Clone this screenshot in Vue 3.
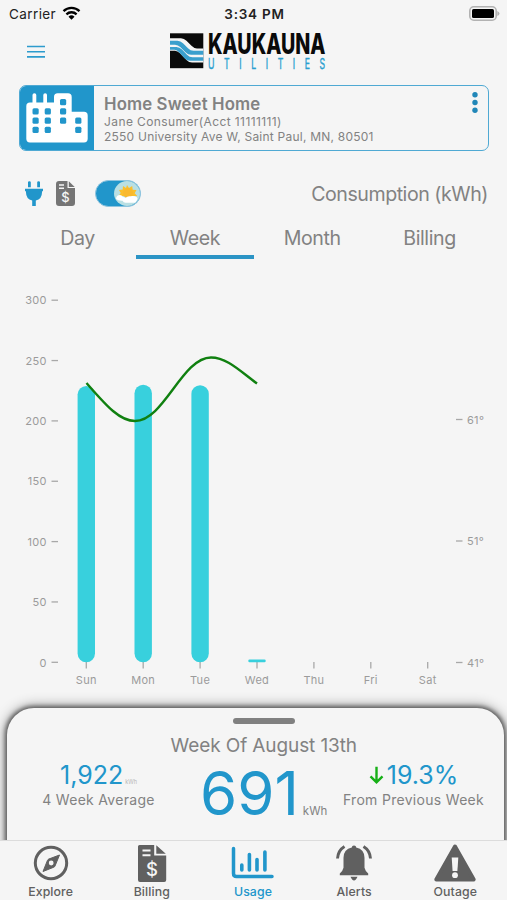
<template>
  <div class="phone">
    <!-- Status bar -->
    <div class="status-bar">
      <div class="carrier">
        <span>Carrier</span>
        <svg class="wifi" viewBox="0 0 18 14">
          <path d="M1 5.2a11.5 11.5 0 0 1 16 0" />
          <path d="M3.9 8.3a7.4 7.4 0 0 1 10.2 0" />
          <path class="dot" d="M6 10.7a4.4 4.4 0 0 1 6 0L9 13.8z" />
        </svg>
      </div>
      <span class="time">3:34 PM</span>
      <svg class="battery" viewBox="0 0 31 15">
        <rect x="0.8" y="0.8" width="26.4" height="13.4" rx="4" fill="#f5f5f5" stroke="#b2b2b2" stroke-width="1.6" />
        <rect x="3" y="3" width="22" height="9" rx="1.6" fill="#000" />
        <path d="M28.3 5v5q2.2-1 2.2-2.5T28.3 5z" fill="#b2b2b2" />
      </svg>
    </div>

    <!-- Header -->
    <header class="header">
      <svg class="burger" viewBox="0 0 18 14">
        <path d="M0 1.5h18M0 6.7h18M0 11.9h18" />
      </svg>
      <svg class="logo" viewBox="0 0 158 38">
        <rect x="1" y="1.300" width="33.300" height="34.900" fill="#0a0a0a" />
        <path d="M1 6.300h11q3 0 5.500 2.500l5 5q2.500 2.700 5.500 2.700h6.300v14H23q-3 0-5.500-2.500L11 21.300Q8.500 18.700 6 18.700H1z" fill="#f5f5f5" />
        <path d="M1 8.700h7.500q3 0 5.500 2.500l5 5q2.500 2.500 5.500 2.500h9.800v4H22q-3 0-5.500-2.500l-5-5Q9 12.700 6 12.700H1z" fill="#3a9fcd" />
        <path d="M1 15h6.500q3 0 5.500 2.500l5 5.300q2.500 2.500 5.500 2.500h10.800v3.400H21q-3 0-5.500-2.500l-5-5.500Q8 17.700 5.500 17.700H1z" fill="#3a9fcd" />
        <text class="logo-name" x="39" y="22.200" textLength="117.500" lengthAdjust="spacingAndGlyphs">KAUKAUNA</text>
        <text class="logo-sub" transform="translate(39 36.700) scale(0.62 1)" textLength="189">UTILITIES</text>
      </svg>
    </header>

    <!-- Account card -->
    <section class="account">
      <div class="account-icon">
        <svg viewBox="0 0 62 50">
          <path
            d="M4 9.500h2.500V2q0-1.700 1.900-1.700T10.300 2v7.500h7V2q0-1.700 1.900-1.700T21 2v7.500h7V4q0-3.700 3.700-3.700H42q3.700 0 3.700 3.700v14.700H58q3.700 0 3.700 3.700V45.700q0 3.700-3.700 3.700H4q-3.700 0-3.700-3.700V13.200q0-3.700 3.700-3.700z"
            fill="#fff"
          />
          <rect
            v-for="(w, i) in windows"
            :key="i"
            :x="w[0]"
            :y="w[1]"
            width="6.200"
            height="6.200"
            rx="1.500"
            fill="#2196cb"
          />
        </svg>
      </div>
      <div class="account-text">
        <h1>Home Sweet Home</h1>
        <p class="owner">Jane Consumer(Acct 11111111)</p>
        <p class="address">2550 University Ave W, Saint Paul, MN, 80501</p>
      </div>
      <svg class="more" viewBox="0 0 6 21">
        <circle cx="3" cy="2.800" r="2.700" />
        <circle cx="3" cy="10.500" r="2.700" />
        <circle cx="3" cy="18.200" r="2.700" />
      </svg>
    </section>

    <!-- Toolbar -->
    <div class="toolbar">
      <svg class="plug" viewBox="0 0 18 25">
        <path d="M3 6.200V1.300Q3 .3 4.400.3t1.400 1v4.900zM12.200 6.200V1.300q0-1 1.400-1t1.400 1v4.900zM0 7.800h18v2.500h-1v1.200q0 6.500-6.200 8V25H7.200v-5.500Q1 18 1 11.500v-1.200H0z" />
      </svg>
      <svg class="bill" viewBox="0 0 19 25">
        <path d="M3 0h8.500v7H19v15q0 3-3 3H3q-3 0-3-3V3q0-3 3-3z" />
        <path d="M12.800.3 18.700 6h-5.900z" />
        <path class="lines" d="M3 4h5M3 7.200h5" />
        <text x="9.500" y="21">$</text>
      </svg>
      <div class="toggle" :class="{ on: weather }" @click="weather = !weather">
        <div class="knob">
          <svg viewBox="0 0 26 26">
            <path d="m13 4 2 3 3.200-2 .5 3.700 3.800.3-1.800 3.300 2.600 2.700H4.500L6.700 12 5 9l3.700-.4L9 5l3 2z" fill="#fbc02d" />
            <circle cx="14" cy="12" r="5" fill="#f9b92e" />
            <path d="M2 18q.3-4 4-4.100 1.700 0 3 2.100 2 0 2.500 1 2-2.300 5-1.700 2-.8 4.500 0 2.500.7 2.600 2.200-1 3.500-2.600 4.200H12q-2.500.2-3.500-1.900-4.500.2-6.500-1.800z" fill="#fff" />
          </svg>
        </div>
      </div>
      <span class="unit-title">Consumption (kWh)</span>
    </div>

    <!-- Tabs -->
    <nav class="tabs">
      <button
        v-for="tab in tabs"
        :key="tab"
        type="button"
        :class="{ active: tab === activeTab }"
        @click="activeTab = tab"
      >
        {{ tab }}
      </button>
    </nav>

    <!-- Chart -->
    <svg class="chart" viewBox="0 0 507 449">
      <g v-for="v in leftTicks" :key="v" class="tick">
        <text x="46.800" :y="yFor(v) + 4.200" text-anchor="end">{{ v }}</text>
        <path :d="`M51.500 ${yFor(v)}h6.500`" />
      </g>
      <g v-for="t in rightTicks" :key="t.label" class="tick">
        <path :d="`M456 ${t.y}h6.500`" />
        <text x="467" :y="t.y + 4.200">{{ t.label }}</text>
      </g>
      <g v-for="(d, i) in days" :key="d.name" class="tick">
        <path :d="`M${xFor(i)} 403v6.500`" />
        <text :x="xFor(i)" y="425" text-anchor="middle">{{ d.name }}</text>
        <rect
          v-if="d.kwh"
          class="bar"
          :x="xFor(i) - 8.700"
          :y="yFor(d.kwh)"
          width="17.400"
          :height="yFor(0) - yFor(d.kwh)"
          :rx="d.kwh > 10 ? 8.700 : 1.200"
        />
      </g>
      <path class="temperature" d="M86.500 124C105 145 119 162 135 162C164 162 182 98.500 211 98.500C227 98.500 240 112 257 124.500" />
    </svg>

    <!-- Summary panel -->
    <section class="summary-wrap">
      <div class="summary">
        <div class="handle"></div>
        <h2>Week Of August 13th</h2>
        <div class="stats">
          <div class="stat average">
            <div class="value">1,922<small>kWh</small></div>
            <div class="label">4 Week Average</div>
          </div>
          <div class="total">691<small>kWh</small></div>
          <div class="stat change">
            <div class="value">
              <svg class="arrow" viewBox="0 0 15 18">
                <path d="M7.500.8v15.500M1.500 10.300l6 6 6-6" />
              </svg>
              19.3%
            </div>
            <div class="label">From Previous Week</div>
          </div>
        </div>
      </div>
    </section>

    <!-- Bottom navigation -->
    <nav class="bottom-nav">
      <a class="nav-item">
        <svg viewBox="0 0 44 40">
          <circle cx="22" cy="20" r="15.700" fill="none" stroke="#606060" stroke-width="3" />
          <path d="m30.500 12-4.500 11q-.3.900-1.200 1.200L14 28.500l4.500-11.200q.4-.8 1.200-1.200z" fill="#606060" stroke="#606060" stroke-linejoin="round" />
          <circle cx="22.200" cy="20" r="2.400" fill="#f5f5f5" />
        </svg>
        <span>Explore</span>
      </a>
      <a class="nav-item">
        <svg viewBox="0 0 44 40">
          <path d="M9.500 2h14.700v10.500h12V37q0 2-2 2H10q-2 0-2-2V3.500Q8 2 9.500 2zM26.300 2.200l9.500 8.600h-9.500z" fill="#606060" />
          <path d="M12.500 7.500h8M12.500 12.200h8" stroke="#f5f5f5" stroke-width="2" />
          <text class="dollar" x="22" y="33">$</text>
        </svg>
        <span>Billing</span>
      </a>
      <a class="nav-item current">
        <svg viewBox="0 0 44 40">
          <path d="M2.500 5.500v25q0 3 3 3H41" fill="none" stroke="#2196cb" stroke-width="3.500" stroke-linecap="round" />
          <path d="M10.800 22v5M18.400 11.500V27M26 16.500V27M33.900 9v18" fill="none" stroke="#2196cb" stroke-width="3.600" stroke-linecap="round" />
        </svg>
        <span>Usage</span>
      </a>
      <a class="nav-item">
        <svg viewBox="0 0 44 40">
          <path d="M22 2.500q2.200 0 2.200 1.900 8.300 1.800 8.300 10.300v10.100q1 4 3.700 5.700v1.700H7.800v-1.700q2.700-1.700 3.700-5.700V14.700q0-8.500 8.300-10.300Q19.800 2.500 22 2.500z" fill="#606060" />
          <path d="M18.500 33.800h7q-1.500 3.600-3.500 3.600t-3.500-3.600z" fill="#606060" />
          <path d="M12.500 3.500Q6 7.500 5.500 15.500M31.500 3.500Q38 7.500 38.500 15.500" fill="none" stroke="#606060" stroke-width="2.900" />
        </svg>
        <span>Alerts</span>
      </a>
      <a class="nav-item">
        <svg viewBox="0 0 44 40">
          <path d="M22 3.500 40.700 36.500H3.300z" fill="#606060" stroke="#606060" stroke-width="4" stroke-linejoin="round" />
          <path d="M18.700 14.500h6.600l-.9 13.500h-4.800z" fill="#f5f5f5" />
          <circle cx="22" cy="32.200" r="2.900" fill="#f5f5f5" />
        </svg>
        <span>Outage</span>
      </a>
    </nav>
  </div>
</template>

<script setup>
import { ref } from 'vue'

const weather = ref(true)
const tabs = ['Day', 'Week', 'Month', 'Billing']
const activeTab = ref('Week')

const windows = [
  [6.5, 15.3], [18.7, 15.3], [6.5, 24.5], [18.7, 24.5], [6.5, 33.7], [18.7, 33.7],
  [34, 6], [34, 15.3], [34, 24.5], [49.2, 24.5], [49.2, 33.7]
]

const leftTicks = [300, 250, 200, 150, 100, 50, 0]
const rightTicks = [
  { label: '61°', y: 160.5 },
  { label: '51°', y: 282 },
  { label: '41°', y: 403.5 }
]

const days = ref([
  { name: 'Sun', kwh: 229 },
  { name: 'Mon', kwh: 230 },
  { name: 'Tue', kwh: 229.5 },
  { name: 'Wed', kwh: 2.3 },
  { name: 'Thu', kwh: 0 },
  { name: 'Fri', kwh: 0 },
  { name: 'Sat', kwh: 0 }
])

// 0 kWh sits on the baseline, 300 kWh near the top
function yFor(kwh) {
  return 403.3 - kwh * 1.207
}

function xFor(i) {
  return 86.3 + i * 56.9
}
</script>

<style>
body {
  background-color: #f5f5f5;
}
</style>

<style scoped>
.phone {
  display: flex;
  flex-direction: column;
  width: 507px;
  height: 900px;
  overflow: hidden;
  background-color: #f5f5f5;
  color: #828282;
  font-family: Inter, "Liberation Sans", sans-serif;
}

.phone * {
  box-sizing: border-box;
}

h1,
h2,
p {
  margin: 0;
  font-weight: 400;
}

.status-bar {
  display: grid;
  grid-template-columns: 1fr auto 1fr;
  align-items: center;
  height: 27px;
  padding: 0 7px 0 9px;
  color: #222;
  font-size: 13.5px;
}

.carrier {
  display: flex;
  align-items: center;
  gap: 6px;
  letter-spacing: 0.4px;
}

.wifi {
  width: 19px;
  height: 14px;
  margin-top: -2px;
  fill: none;
  stroke: #000;
  stroke-width: 2.3;
}

.wifi .dot {
  fill: #000;
  stroke: none;
}

.time {
  font-weight: 600;
  letter-spacing: 0.75px;
}

.battery {
  justify-self: end;
  width: 31px;
  height: 15px;
  margin-top: -1px;
}

.header {
  display: grid;
  grid-template-columns: 27px 142px 158px;
  height: 58px;
}

.burger {
  grid-column: 2;
  width: 18px;
  height: 14px;
  margin-top: 18px;
  fill: none;
  stroke: #2d9bcd;
  stroke-width: 1.6;
}

.logo {
  width: 158px;
  height: 38px;
  margin-top: 5px;
  overflow: visible;
}

.logo-name {
  font-size: 29px;
  font-weight: 800;
  fill: #0a0a0a;
}

.logo-sub {
  font-size: 14px;
  fill: #2a9fd0;
  stroke: #2a9fd0;
  stroke-width: 0.4;
}

.account {
  display: flex;
  height: 66px;
  margin: 0 18px 0 19px;
  border: 1.5px solid #4fa9d3;
  border-radius: 7px;
  overflow: hidden;
}

.account-icon {
  width: 74px;
  padding: 7px 0 0 6px;
  background-color: #2196cb;
}

.account-icon svg {
  display: block;
  width: 62px;
  height: 50px;
}

.account-text {
  flex: 1;
  padding: 8px 0 0 10px;
}

.account-text h1 {
  font-size: 16.8px;
  font-weight: 600;
  line-height: 21px;
  letter-spacing: 0.12px;
}

.account-text p {
  font-size: 12px;
  line-height: 14.5px;
  letter-spacing: 0.4px;
}

.account-text .address {
  letter-spacing: 0.23px;
}

.more {
  width: 6px;
  height: 21px;
  margin: 6px 10px 0 0;
  fill: #2187b8;
}

.toolbar {
  display: flex;
  align-items: center;
  height: 54px;
  margin-top: 15px;
  padding: 1px 19px 0 25px;
}

.plug {
  width: 18px;
  height: 25px;
  fill: #2196cb;
}

.bill {
  width: 19px;
  height: 25px;
  margin-left: 13px;
  fill: #757575;
}

.bill .lines {
  stroke: #f5f5f5;
  stroke-width: 1.4;
}

.bill text {
  font-size: 13px;
  font-weight: 500;
  fill: #f5f5f5;
  text-anchor: middle;
}

.toggle {
  display: flex;
  width: 46px;
  height: 27px;
  margin-left: 20px;
  border: 1px solid #8fc4de;
  border-radius: 14px;
  background-color: #bbb;
  cursor: pointer;
}

.toggle.on {
  justify-content: flex-end;
  background-color: #2196cb;
}

.knob {
  width: 26px;
  height: 25px;
  border-radius: 50%;
  background-color: #b9dfe3;
  overflow: hidden;
}

.unit-title {
  margin-left: auto;
  font-size: 19.6px;
  letter-spacing: -0.46px;
}

.tabs {
  display: grid;
  grid-template-columns: repeat(4, 117.3px);
  height: 39px;
  margin-left: 19px;
}

.tabs button {
  padding: 0;
  border: none;
  border-bottom: 4px solid transparent;
  background: none;
  color: #828282;
  font-family: inherit;
  font-size: 19.6px;
  letter-spacing: -0.4px;
  cursor: pointer;
}

.tabs button.active {
  border-bottom-color: #2b94c5;
}

.chart {
  display: block;
  width: 507px;
  height: 449px;
  flex: none;
}

.tick text {
  font-size: 11px;
  letter-spacing: 0.3px;
  fill: #9b9b9b;
}

.tick path {
  stroke: #a8a8a8;
  stroke-width: 1.3;
}

.bar {
  fill: #38d0dd;
}

.temperature {
  fill: none;
  stroke: #108010;
  stroke-width: 2.4;
}

.summary-wrap {
  height: 132px;
  padding: 0 3.5px 0 7px;
}

.summary {
  display: flex;
  flex-direction: column;
  align-items: center;
  height: 160px;
  border-radius: 27px 27px 0 0;
  background-color: #f5f5f5;
  box-shadow: 0 0 4px 1.5px rgba(0, 0, 0, 0.5), 0 0 14px 1px rgba(0, 0, 0, 0.45);
}

.handle {
  flex: none;
  width: 62px;
  height: 6px;
  margin: 10px 0 0 17px;
  border-radius: 3px;
  background-color: #808080;
}

.summary h2 {
  margin: 9px 0 0 17px;
  font-size: 19px;
  line-height: 26px;
  letter-spacing: -0.1px;
}

.stats {
  display: grid;
  grid-template-columns: 183px 147px 153px;
  width: 100%;
  text-align: center;
}

.stat .value {
  display: flex;
  align-items: center;
  justify-content: center;
  height: 32px;
  color: #2196cb;
  font-size: 25px;
}

.average .value {
  align-items: baseline;
  padding-top: 1px;
}

.stat small {
  margin-left: 2px;
  color: #b5b5b5;
  font-size: 5.5px;
}

.stat .label {
  font-size: 14px;
  line-height: 18px;
  letter-spacing: 0.3px;
  white-space: nowrap;
}

.total {
  display: flex;
  align-items: baseline;
  height: 70px;
  padding-left: 10px;
  color: #2196cb;
  font-size: 60px;
  line-height: 68px;
}

.total small {
  margin-left: 4px;
  color: #828282;
  font-size: 11.5px;
}

.arrow {
  width: 15px;
  height: 18px;
  margin-right: 3px;
  fill: none;
  stroke: #17b017;
  stroke-width: 2.4;
}

.bottom-nav {
  position: relative;
  display: grid;
  grid-template-columns: repeat(5, 101.2px);
  height: 60px;
  border-top: 1px solid #dcdcdc;
  background-color: #f5f5f5;
}

.nav-item {
  display: flex;
  flex-direction: column;
  align-items: center;
  padding-top: 2px;
  color: #606060;
  font-size: 12.3px;
  font-weight: 500;
  line-height: 17px;
  letter-spacing: 0.1px;
}

.nav-item svg {
  width: 44px;
  height: 40px;
}

.nav-item.current {
  color: #2196cb;
}

.dollar {
  font-size: 18.5px;
  font-weight: 500;
  fill: #f5f5f5;
  text-anchor: middle;
}
</style>
